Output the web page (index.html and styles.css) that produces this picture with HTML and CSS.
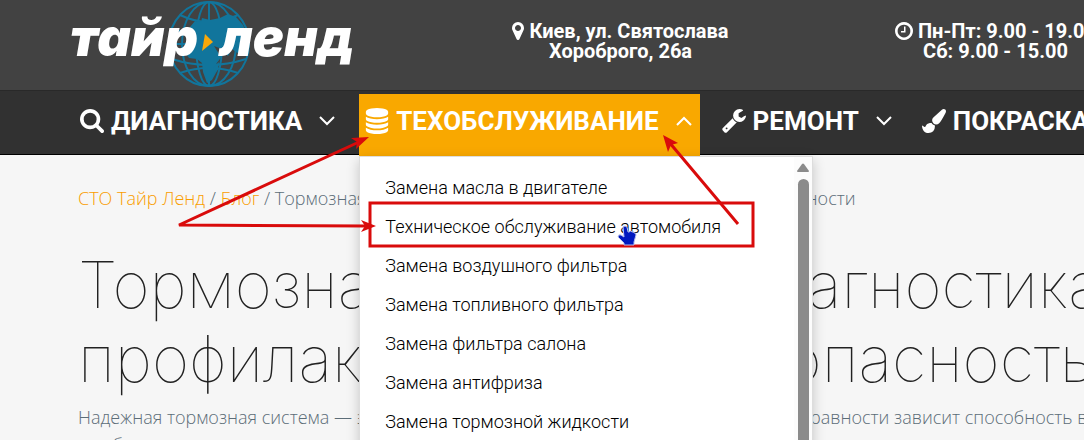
FILE: index.html
```html
<!DOCTYPE html>
<html lang="ru">
<head>
    <meta charset="UTF-8">
    <meta name="viewport" content="width=device-width, initial-scale=1.0">
    <title>Тормозная система - СТО Тайр Ленд</title>
    <link rel="stylesheet" href="styles.css">
</head>
<body>
    <header class="site-header">
        <div class="header-grid">
            <a href="#" class="logo">
                <svg class="logo-globe" viewBox="0 0 82 88" aria-hidden="true">
                    <g fill="none" stroke="#11759c" stroke-width="2">
                        <ellipse cx="41" cy="44" rx="40" ry="42"/>
                        <ellipse cx="41" cy="44" rx="27" ry="42"/>
                        <ellipse cx="41" cy="44" rx="13" ry="42"/>
                        <path d="M41 2v84M1 44h80M12 15q29 14 58 0M4 29q37 12 74 0M4 59q37 12 74 0M12 73q29-10 58 0"/>
                    </g>
                    <path fill="#11759c" d="M22 27l5-6 6 1 1-4 8 2 10-2 8-4 8 3 7 8 5 12v12l-9 5-7-5-4 7-6-7-8-3 5 8 4 1-7 9 1 7-5 9-5 3-4-11-1-9-5-4-8-1-5-7 2-9 6-6-2-5z"/>
                    <path fill="#11759c" d="M45 68l6-6-1 8-5 4z"/>
                    <path fill="#f9a80a" d="M37 34l8 8-11 9z"/>
                </svg>
                <span class="logo-word">тайр</span>
                <span class="logo-word">ленд</span>
            </a>
            <div class="header-info">
                <svg class="info-icon marker" viewBox="0 128 1024 1536" aria-hidden="true"><path d="M768 640q0-106-75-181t-181-75-181 75-75 181 75 181 181 75 181-75 75-181zm256 0q0 109-33 179l-364 774q-16 33-47.500 52t-67.500 19-67.500-19-46.500-52L33 819Q0 749 0 640q0-212 150-362t362-150 362 150 150 362z"/></svg>
                Киев, ул. Святослава<br>Хороброго, 26а
            </div>
            <div class="header-info">
                <svg class="info-icon" viewBox="0 128 1536 1536" aria-hidden="true"><path d="M896 544v448q0 14-9 23t-23 9H544q-14 0-23-9t-9-23v-64q0-14 9-23t23-9h224V544q0-14 9-23t23-9h64q14 0 23 9t9 23zm416 352q0-148-73-273t-198-198-273-73-273 73-198 198-73 273 73 273 198 198 273 73 273-73 198-198 73-273zm224 0q0 209-103 385.500T1153.500 1561 768 1664t-385.500-103T103 1281.500 0 896t103-385.500T382.500 231 768 128t385.500 103T1433 510.500 1536 896z"/></svg>
                Пн-Пт: 9.00 - 19.00<br>Сб: 9.00 - 15.00
            </div>
        </div>
    </header>

    <nav class="main-nav">
        <ul class="nav-list">
            <li class="nav-item">
                <a href="#" class="nav-link">
                    <svg class="nav-icon" viewBox="0 0 1664 1664" aria-hidden="true"><path d="M1152 704q0-185-131.500-316.500T704 256 387.500 387.500 256 704t131.500 316.500T704 1152t316.500-131.500T1152 704zm512 832q0 52-38 90t-90 38q-54 0-90-38l-343-342q-179 124-399 124-143 0-273.500-55.500t-225-150-150-225T0 704t55.500-273.500 150-225 225-150T704 0t273.500 55.500 225 150 150 225T1408 704q0 220-124 399l343 343q37 37 37 90z"/></svg>
                    <span>ДИАГНОСТИКА</span>
                    <svg class="chevron" viewBox="0 0 16 10" aria-hidden="true"><path d="M1 1l7 7 7-7"/></svg>
                </a>
            </li>
            <li class="nav-item active">
                <a href="#" class="nav-link">
                    <svg class="nav-icon" viewBox="0 0 1536 1792" aria-hidden="true"><path d="M768 768q237 0 443-43t325-127v170q0 69-103 128t-280 93.500-385 34.500-385-34.500T103 896 0 768V598q119 84 325 127t443 43zm0 768q237 0 443-43t325-127v170q0 69-103 128t-280 93.500-385 34.500-385-34.500-280-93.500T0 1536v-170q119 84 325 127t443 43zm0-384q237 0 443-43t325-127v170q0 69-103 128t-280 93.500-385 34.500-385-34.500T103 1280 0 1152V982q119 84 325 127t443 43zM768 0q208 0 385 34.500t280 93.500 103 128v128q0 69-103 128t-280 93.500T768 640t-385-34.500T103 512 0 384V256q0-69 103-128t280-93.500T768 0z"/></svg>
                    <span>ТЕХОБСЛУЖИВАНИЕ</span>
                    <svg class="chevron" viewBox="0 0 16 10" aria-hidden="true"><path d="M1 9l7-7 7 7"/></svg>
                </a>
                <div class="dropdown">
                    <ul class="dropdown-list">
                        <li><a href="#">Замена масла в двигателе</a></li>
                        <li><a href="#">Техническое обслуживание автомобиля</a></li>
                        <li><a href="#">Замена воздушного фильтра</a></li>
                        <li><a href="#">Замена топливного фильтра</a></li>
                        <li><a href="#">Замена фильтра салона</a></li>
                        <li><a href="#">Замена антифриза</a></li>
                        <li><a href="#">Замена тормозной жидкости</a></li>
                    </ul>
                    <div class="scroll-track">
                        <svg viewBox="0 0 12 10" aria-hidden="true"><path d="M5 1q1-1 2 0l5 7q0 1-1 1H1q-1 0-1-1z"/></svg>
                        <div class="scroll-thumb"></div>
                    </div>
                </div>
            </li>
            <li class="nav-item">
                <a href="#" class="nav-link">
                    <svg class="nav-icon" viewBox="0 128 1664 1664" aria-hidden="true"><path d="M384 1472q0-26-19-45t-45-19-45 19-19 45 19 45 45 19 45-19 19-45zm644-420l-682 682q-37 37-90 37-52 0-91-37L59 1626q-38-36-38-90 0-53 38-91l681-681q39 98 114.500 173.500T1028 1052zm634-435q0 39-23 106-47 134-164.500 217.500T1216 1024q-185 0-316.500-131.500T768 576t131.500-316.500T1216 128q58 0 121.500 16.500T1445 191q16 11 16 28t-16 28l-293 169v224l193 107q5-3 79-48.500t135.500-81T1630 582q15 0 23.500 10t8.500 25z"/></svg>
                    <span>РЕМОНТ</span>
                    <svg class="chevron" viewBox="0 0 16 10" aria-hidden="true"><path d="M1 1l7 7 7-7"/></svg>
                </a>
            </li>
            <li class="nav-item">
                <a href="#" class="nav-link">
                    <svg class="nav-icon" viewBox="0 0 1792 1792" aria-hidden="true"><path d="M1615 0q70 0 122.500 46.500T1790 163q0 63-45 151-332 629-465 752-97 91-218 91-126 0-216.500-92.500T755 845q0-128 92-212l638-579q59-54 130-54zM706 1034q39 76 106.500 130t150.500 76l1 71q4 213-129.500 347T486 1792q-123 0-218-46.500T115.500 1618 29 1434 0 1220q7 5 41 30t62 44.500 59 36.500 46 17q41 0 55-37 25-66 57.500-112.500t69.500-76 88-47.500 103-25.500 125-10.500z"/></svg>
                    <span>ПОКРАСКА</span>
                </a>
            </li>
        </ul>
    </nav>

    <main class="content">
        <div class="breadcrumbs">
            <a href="#">СТО Тайр Ленд</a> / <a href="#">Блог</a> / Тормозная система: диагностика, профилактика, меры безопасности
        </div>
        <h1>Тормозная система - диагностика,<br>профилактика и вся безопасность</h1>
        <p>Надежная тормозная система — это основа вашей безопасности на дороге. От ее исправности зависит способность водителя<br>и избежать аварии на дороге.</p>
    </main>

    <svg class="marks" width="1084" height="440" viewBox="0 0 1084 440" aria-hidden="true">
        <g fill="none" stroke="#d90b0b" stroke-width="3">
            <rect x="370" y="203" width="383" height="43"/>
            <path d="M359 142L179 225l188 1M738 224L669 142"/>
        </g>
        <g fill="#d90b0b">
            <path d="M369 137l-13 12 1-7-6-4z"/>
            <path d="M376 226l-15 6 4-6-4-6z"/>
            <path d="M663 135l15 8-7 2-3 7z"/>
        </g>
        <path fill="#0019c0" stroke="#b8c0ee" d="M623 227q2-2 4 0l1 5h1q2-2 3 0 2-1 2 1 2-1 2 2l-2 7v3h-10v-2l-6-6q0-3 3-2l3 2z"/>
    </svg>
</body>
</html>
```

FILE: styles.css
```css
body {
    margin: 0;
    height: 100vh;
    overflow: hidden;
    position: relative;
    background: #f6f6f6;
    color: #5c6d78;
    font-family: "Open Sans", "Noto Sans", sans-serif;
}
a {
    text-decoration: none;
}
ul {
    list-style: none;
    margin: 0;
    padding: 0;
}

.site-header {
    height: 90px;
    background: #424242;
}
.header-grid {
    display: grid;
    grid-template-columns: repeat(3, 375px);
    padding-left: 58px;
}
.logo {
    position: relative;
    display: flex;
    gap: 22px;
    height: 88px;
    padding-left: 12px;
    color: #fff;
}
.logo-globe {
    position: absolute;
    left: 110px;
    top: 0;
    width: 82px;
    height: 88px;
}
.logo-word {
    position: relative;
    font: italic 900 52px/76px Inter, sans-serif;
}
.header-info {
    padding-top: 21px;
    color: #fff;
    font: bold 20px/20px Roboto, sans-serif;
    text-align: center;
}
.info-icon {
    height: 18px;
    fill: #fff;
    vertical-align: -2px;
}

.main-nav {
    height: 63px;
    background: #313131;
    border-top: 1px solid #292929;
    border-bottom: 1px solid #000;
}
.nav-list {
    display: flex;
    gap: 16px;
    padding: 3px 0 0 74px;
}
.nav-item {
    position: relative;
}
.nav-link {
    display: flex;
    align-items: center;
    height: 54px;
    padding: 0 8px 8px 6px;
    color: #fff;
    font: bold 26px/32px Roboto, sans-serif;
    white-space: nowrap;
}
.nav-icon {
    width: 24px;
    height: 26px;
    margin-right: 7px;
    fill: #fff;
}
.chevron {
    width: 16px;
    height: 10px;
    margin-left: 17px;
    fill: none;
    stroke: #fff;
    stroke-width: 2;
}
.active .nav-link {
    background: #f9a800;
}

.dropdown {
    position: absolute;
    z-index: 2;
    top: 62px;
    left: 0;
    display: flex;
    width: 452px;
    height: 420px;
    background: #fff;
    border: 1px solid #ddd;
    box-shadow: 0 4px 12px rgba(0, 0, 0, 0.2);
}
.dropdown-list {
    flex: 1;
    padding: 11px 0 0 25px;
}
.dropdown-list a {
    display: block;
    color: #000;
    font: 300 18px/39px Roboto, sans-serif;
}
.scroll-track {
    display: flex;
    flex-direction: column;
    align-items: center;
    gap: 6px;
    width: 18px;
    padding-top: 6px;
    background: #fcfcfc;
}
.scroll-track svg {
    width: 12px;
    height: 10px;
    fill: #8b8b8b;
}
.scroll-thumb {
    flex: 1;
    width: 11px;
    background: #8b8b8b;
    border-radius: 6px;
}

.content {
    padding: 31px 0 0 78px;
    font-size: 18px;
    font-weight: 300;
    line-height: 24px;
    white-space: nowrap;
}
.breadcrumbs a {
    color: #f99d00;
}
h1 {
    margin: 38px 0 8px;
    color: #222;
    font: 100 64px/74px Inter, sans-serif;
    font-optical-sizing: none;
}
p {
    margin: 0;
    line-height: 27px;
}

.marks {
    position: absolute;
    z-index: 3;
    left: 0;
    top: 0;
    pointer-events: none;
}
```
